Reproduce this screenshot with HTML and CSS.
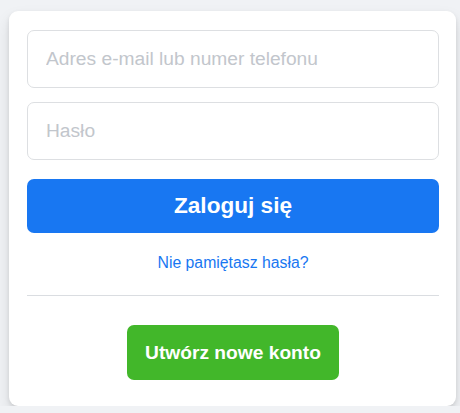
FILE: index.html
```html
<!DOCTYPE html>
<html lang="pl">
<head>
<meta charset="utf-8">
<title>Zaloguj się</title>
<link rel="stylesheet" href="styles.css">
</head>
<body>
  <div class="card">
    <form class="login">
      <input class="field" type="text" placeholder="Adres e-mail lub numer telefonu">
      <input class="field" type="password" placeholder="Hasło">
      <button class="btn-login" type="button">Zaloguj się</button>
      <a class="forgot" href="#">Nie pamiętasz hasła?</a>
      <div class="divider"></div>
      <div class="create-wrap">
        <button class="btn-create" type="button">Utwórz nowe konto</button>
      </div>
    </form>
  </div>
</body>
</html>
```

FILE: styles.css
```css
* { box-sizing: border-box; }
html, body { margin: 0; }
body {
  background: #f0f2f5;
  padding: 11px 0 0 9px;
  font-family: "Liberation Sans", Arial, Helvetica, sans-serif;
}
.card {
  width: 447px;
  height: 395px;
  background: #fff;
  border-radius: 9px;
  box-shadow: 0 2px 4px rgba(0,0,0,.1), 0 8px 16px rgba(0,0,0,.1);
  padding: 19px 17px 26px 18px;
}
.login {
  display: flex;
  flex-direction: column;
  margin: 0;
}
.field {
  height: 58px;
  width: 100%;
  border: 1px solid #dddfe2;
  border-radius: 7px;
  padding: 0 18px;
  font-family: inherit;
  font-size: 19.2px;
  color: #1c1e21;
  margin: 0 0 14px;
  outline: none;
}
.field::placeholder { color: #c2c6cc; }
.btn-login {
  margin-top: 5px;
  height: 54px;
  width: 100%;
  border: none;
  border-radius: 7px;
  background: #1877f2;
  color: #fff;
  font-family: inherit;
  font-weight: bold;
  font-size: 22.6px;
  cursor: pointer;
}
.forgot {
  margin-top: 20px;
  line-height: 20px;
  text-align: center;
  color: #1877f2;
  font-size: 15.8px;
  text-decoration: none;
}
.divider {
  margin-top: 22px;
  height: 1px;
  background: #dadde1;
}
.create-wrap {
  display: flex;
  justify-content: center;
  margin-top: 29px;
}
.btn-create {
  height: 55px;
  padding: 0 18px;
  border: none;
  border-radius: 7px;
  background: #42b72a;
  color: #fff;
  font-family: inherit;
  font-weight: bold;
  font-size: 19.2px;
  cursor: pointer;
}
```
